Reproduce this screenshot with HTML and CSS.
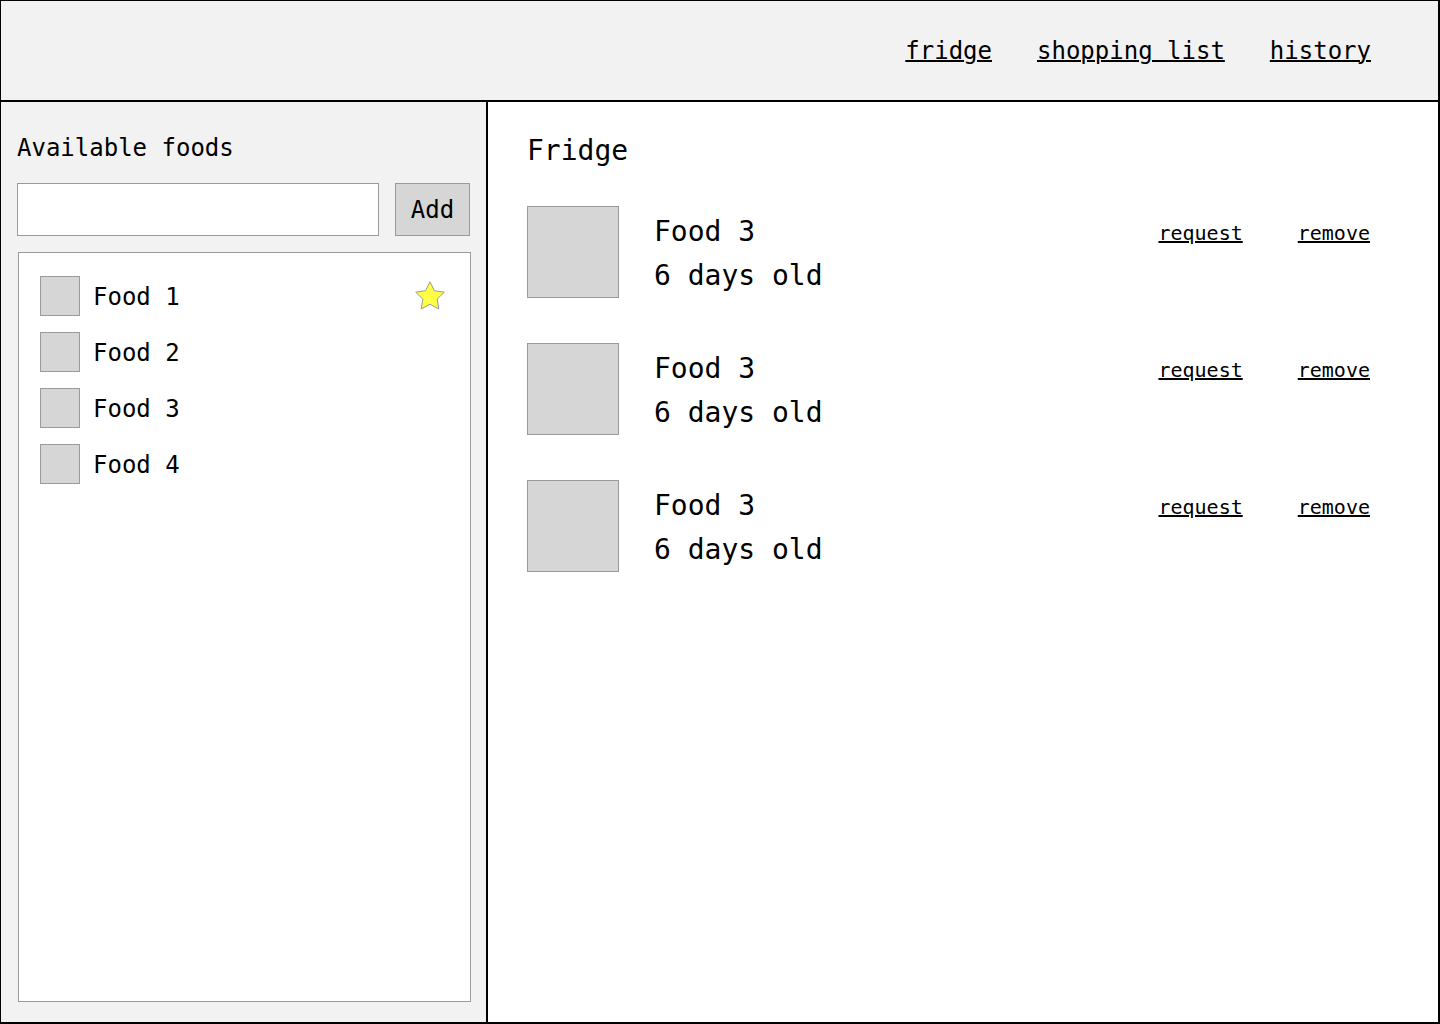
FILE: index.html
```html
<!DOCTYPE html>
<html lang="en">
<head>
<meta charset="utf-8">
<title>Fridge</title>
<link rel="stylesheet" href="styles.css">
</head>
<body>
<div class="app">
  <header class="topbar">
    <nav class="nav">
      <a href="#" class="nav-link">fridge</a>
      <a href="#" class="nav-link">shopping list</a>
      <a href="#" class="nav-link">history</a>
    </nav>
  </header>
  <div class="body">
    <aside class="sidebar">
      <h2 class="side-title">Available foods</h2>
      <div class="add-row">
        <input class="add-input" type="text">
        <button class="add-btn" type="button">Add</button>
      </div>
      <ul class="food-list">
        <li class="food-item">
          <span class="thumb"></span>
          <span class="food-name">Food 1</span>
          <svg class="star" width="30" height="29" viewBox="0 0 30 29">
            <polygon points="15,0.8 19.41,9.73 29.27,11.16 22.13,18.12 23.82,27.94 15,23.3 6.18,27.94 7.87,18.12 0.73,11.16 10.59,9.73" fill="#ffff44" stroke="#9a9a9a" stroke-width="1" stroke-linejoin="round"/>
          </svg>
        </li>
        <li class="food-item"><span class="thumb"></span><span class="food-name">Food 2</span></li>
        <li class="food-item"><span class="thumb"></span><span class="food-name">Food 3</span></li>
        <li class="food-item"><span class="thumb"></span><span class="food-name">Food 4</span></li>
      </ul>
    </aside>
    <main class="main">
      <h1 class="main-title">Fridge</h1>
      <div class="rows">
        <div class="row">
          <span class="photo"></span>
          <div class="info"><div>Food 3</div><div>6 days old</div></div>
          <div class="actions"><a href="#" class="act">request</a><a href="#" class="act">remove</a></div>
        </div>
        <div class="row">
          <span class="photo"></span>
          <div class="info"><div>Food 3</div><div>6 days old</div></div>
          <div class="actions"><a href="#" class="act">request</a><a href="#" class="act">remove</a></div>
        </div>
        <div class="row">
          <span class="photo"></span>
          <div class="info"><div>Food 3</div><div>6 days old</div></div>
          <div class="actions"><a href="#" class="act">request</a><a href="#" class="act">remove</a></div>
        </div>
      </div>
    </main>
  </div>
</div>
</body>
</html>
```

FILE: styles.css
```css
* { box-sizing: border-box; }
html, body { margin: 0; padding: 0; }
body {
  font-family: "DejaVu Sans Mono", "Liberation Mono", monospace;
  color: #000;
  background: #fff;
}
.app {
  width: 1440px;
  height: 1024px;
  border-style: solid;
  border-color: #000;
  border-width: 1px 2px 2px 1px;
  display: flex;
  flex-direction: column;
}
.topbar {
  height: 101px;
  flex: none;
  background: #f2f2f2;
  border-bottom: 2px solid #000;
  padding: 36px 67px 0 0;
}
.nav {
  display: flex;
  justify-content: flex-end;
  gap: 45px;
}
.nav-link {
  font-size: 24px;
  line-height: 28px;
  color: #000;
  text-decoration: underline;
  text-decoration-thickness: 2px;
}
.body {
  flex: 1;
  display: flex;
  min-height: 0;
}
.sidebar {
  width: 487px;
  flex: none;
  background: #f2f2f2;
  border-right: 2px solid #000;
  padding: 32px 15px 20px 16px;
  display: flex;
  flex-direction: column;
}
.side-title {
  margin: 0 0 21px;
  font-size: 24px;
  line-height: 28px;
  font-weight: normal;
}
.add-row {
  display: flex;
  gap: 16px;
  height: 53px;
}
.add-input {
  width: 362px;
  height: 53px;
  border: 1px solid #9a9a9a;
  background: #fff;
  margin: 0;
  padding: 0 8px;
  font: inherit;
  font-size: 24px;
  outline: none;
}
.add-btn {
  width: 75px;
  height: 53px;
  margin: 0;
  padding: 0;
  border: 1px solid #9a9a9a;
  background: #d6d6d6;
  font-family: inherit;
  font-size: 24px;
  line-height: 28px;
  color: #000;
}
.food-list {
  list-style: none;
  flex: 1;
  margin: 16px 0 0 1px;
  padding: 23px 25px 0 21px;
  background: #fff;
  border: 1px solid #9a9a9a;
  display: flex;
  flex-direction: column;
  gap: 16px;
}
.food-item {
  display: flex;
  align-items: center;
  height: 40px;
  gap: 13px;
}
.thumb {
  width: 40px;
  height: 40px;
  flex: none;
  background: #d6d6d6;
  border: 1px solid #9a9a9a;
}
.food-name {
  font-size: 24px;
  line-height: 28px;
  padding-top: 2px;
}
.star {
  margin-left: auto;
  margin-top: -2px;
  display: block;
}
.main {
  flex: 1;
  background: #fff;
  padding: 32px 68px 0 39px;
}
.main-title {
  margin: 0 0 39px;
  font-size: 28px;
  line-height: 33px;
  font-weight: normal;
}
.rows {
  display: flex;
  flex-direction: column;
  gap: 45px;
}
.row {
  display: flex;
  align-items: flex-start;
  height: 92px;
}
.photo {
  width: 92px;
  height: 92px;
  flex: none;
  background: #d6d6d6;
  border: 1px solid #9a9a9a;
}
.info {
  margin-left: 35px;
  padding-top: 4px;
  font-size: 28px;
  line-height: 44px;
}
.actions {
  margin-left: auto;
  padding-top: 16px;
  display: flex;
  gap: 55px;
}
.act {
  font-size: 20px;
  line-height: 23px;
  color: #000;
  text-decoration: underline;
  text-decoration-thickness: 2px;
}
```
